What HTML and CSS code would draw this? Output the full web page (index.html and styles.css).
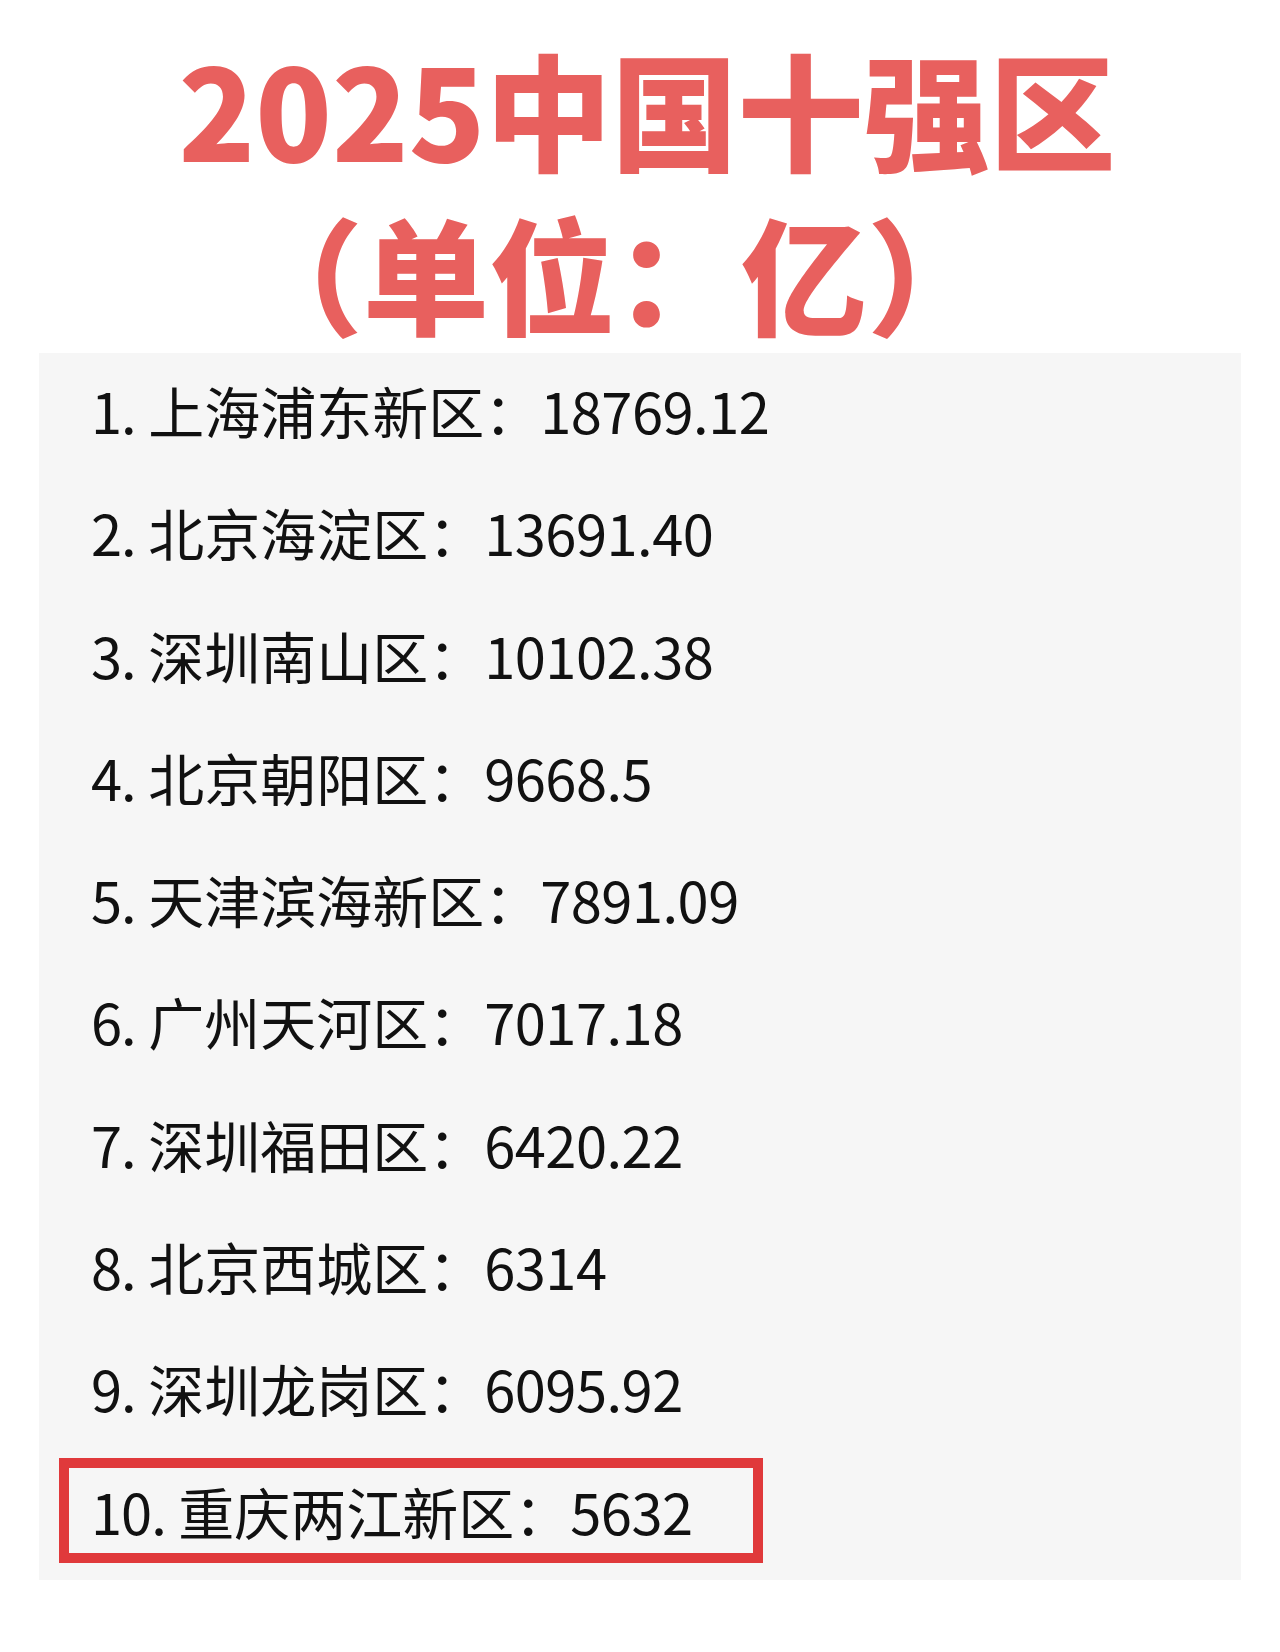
FILE: index.html
```html
<!DOCTYPE html>
<html lang="zh-CN">
<head>
<meta charset="utf-8">
<title>2025中国十强区</title>
<link rel="stylesheet" href="styles.css">
</head>
<body>
<header class="title">
  <div class="title-line title-line-1">2025中国十强区</div>
  <div class="title-line title-line-2">（单位：亿）</div>
</header>
<section class="panel">
  <ol class="rank-list">
    <li class="rank-item"><span class="rank">1.</span> 上海浦东新区：<span class="num">18769.12</span></li>
    <li class="rank-item"><span class="rank">2.</span> 北京海淀区：<span class="num">13691.40</span></li>
    <li class="rank-item"><span class="rank">3.</span> 深圳南山区：<span class="num">10102.38</span></li>
    <li class="rank-item"><span class="rank">4.</span> 北京朝阳区：<span class="num">9668.5</span></li>
    <li class="rank-item"><span class="rank">5.</span> 天津滨海新区：<span class="num">7891.09</span></li>
    <li class="rank-item"><span class="rank">6.</span> 广州天河区：<span class="num">7017.18</span></li>
    <li class="rank-item"><span class="rank">7.</span> 深圳福田区：<span class="num">6420.22</span></li>
    <li class="rank-item"><span class="rank">8.</span> 北京西城区：<span class="num">6314</span></li>
    <li class="rank-item"><span class="rank">9.</span> 深圳龙岗区：<span class="num">6095.92</span></li>
    <li class="rank-item rank-item-highlight"><span class="rank">10.</span> 重庆两江新区：<span class="num">5632</span></li>
  </ol>
</section>
</body>
</html>
```
FILE: styles.css
```css
html, body {
  margin: 0;
  padding: 0;
  background: #ffffff;
}
body {
  width: 1280px;
  height: 1652px;
  font-family: "Noto Sans CJK SC", "Noto Sans", sans-serif;
}
.title {
  padding-top: 26px;
  color: #e8605e;
  font-weight: 900;
  font-size: 126px;
  line-height: 163.5px;
  text-align: center;
}
.title-line {
  height: 163.5px;
}
.title-line-1 {
  padding-left: 14px;
}
.title-line-2 {
  padding-right: 50px;
}
.panel {
  margin: 0 39px;
  background: #f6f6f6;
  padding: 4.5px 0 17px 0;
}
.rank-list {
  list-style: none;
  margin: 0;
  padding: 0;
  display: flex;
  flex-direction: column;
  gap: 17.3px;
}
.rank-item {
  box-sizing: border-box;
  width: 704px;
  margin-left: 20px;
  border: 10px solid transparent;
  padding: 7.5px 0 7.5px 22px;
  height: 105px;
  font-size: 56px;
  line-height: 70px;
  color: #111111;
  font-weight: 400;
  white-space: nowrap;
  font-kerning: normal;
}
.rank {
  letter-spacing: -1px;
}
.num {
  font-variant-numeric: proportional-nums;
  letter-spacing: -0.5px;
}
.rank-item-highlight {
  border-color: #e0393b;
}
```
